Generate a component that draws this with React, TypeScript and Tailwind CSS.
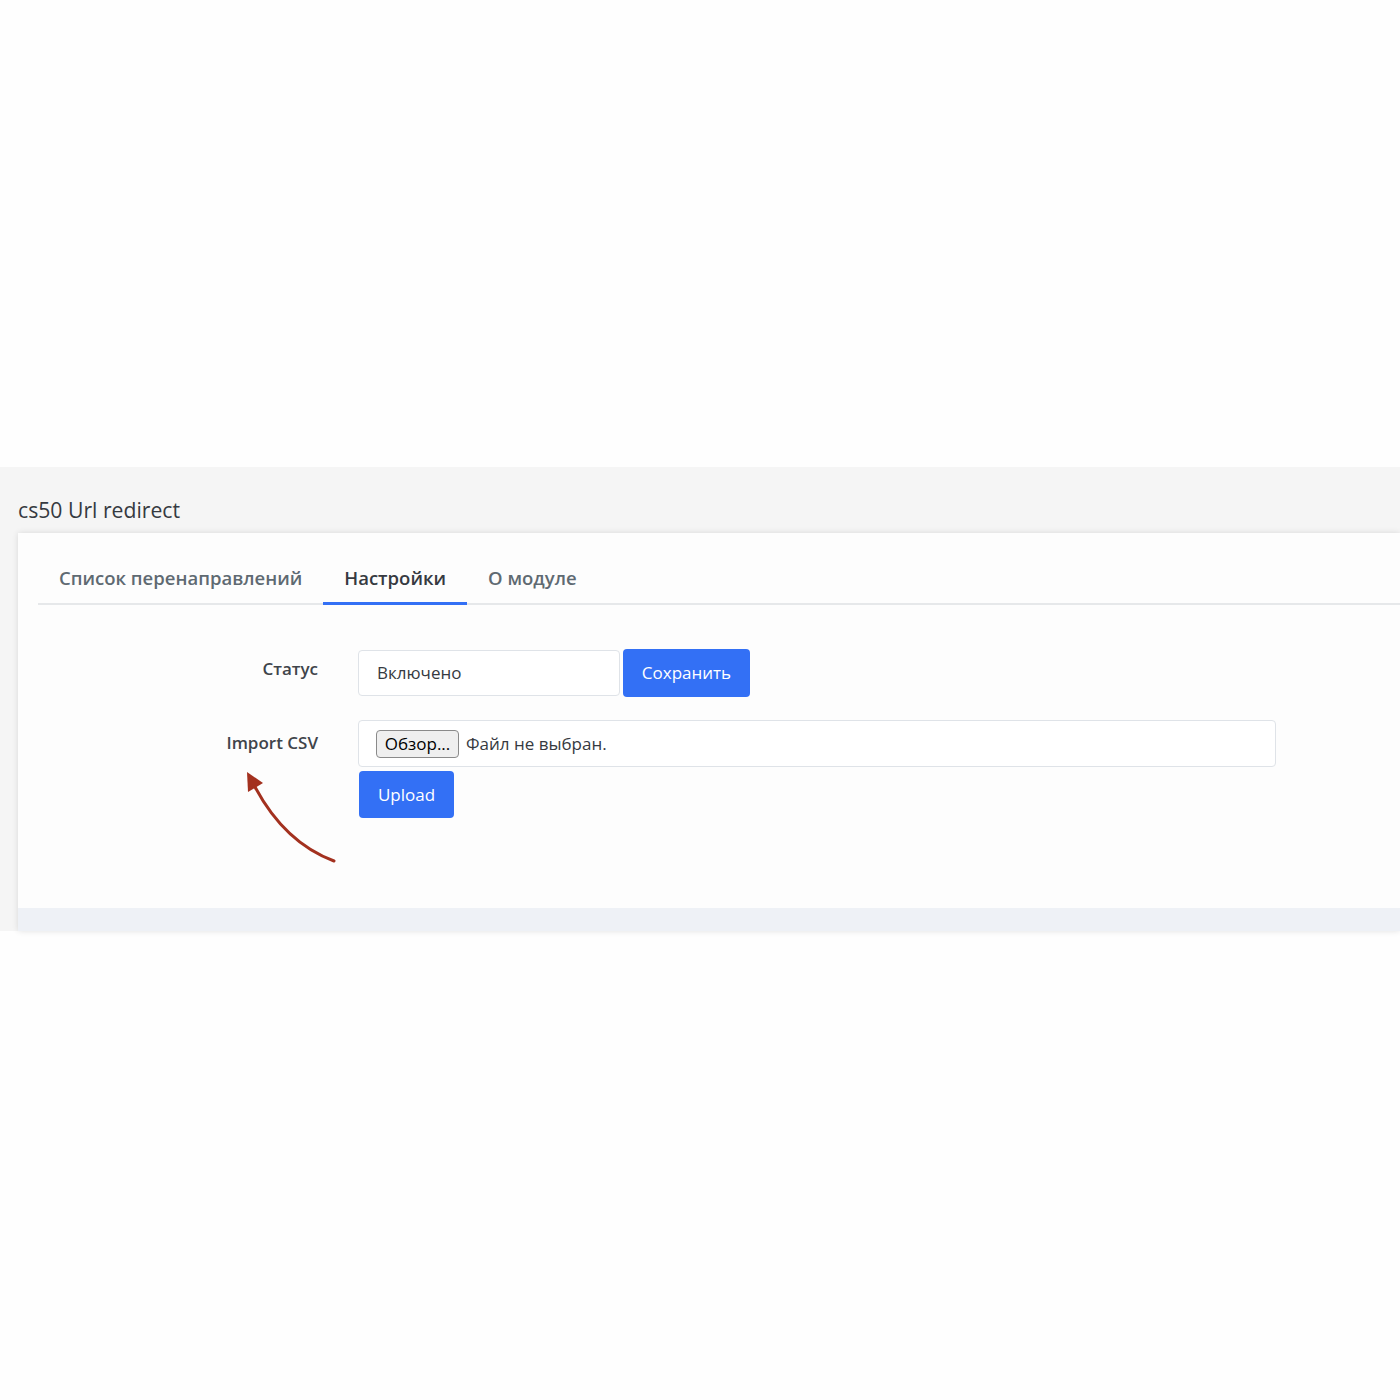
import React from "react";

export default function App() {
  const font = { fontFamily: '"Open Sans", "Noto Sans", sans-serif' };
  return (
    <div className="w-[1400px] h-[1400px] bg-[#fefefe] overflow-hidden" style={font}>
      <div className="h-[467px]" />
      <div className="bg-[#f5f5f5] pl-[18px] pt-[28px]">
        <h1 className="text-[21.2px] leading-[30px] text-[#363a41] font-normal mb-[8px]">cs50 Url redirect</h1>
        <div className="bg-[#fdfdfd] shadow-[0_0_6px_rgba(0,0,0,0.12)] relative">
          <div className="pl-[20px] pt-[20px]">
            <div className="flex border-b-2 border-[#e6e8ea] text-[18.5px] leading-[27px] font-semibold">
              <div className="px-[21px] pt-[11px] pb-[11px] text-[#5f6a72] -mb-[2px] border-b-[3px] border-transparent">Список перенаправлений</div>
              <div className="px-[21px] pt-[11px] pb-[11px] text-[#363a41] -mb-[2px] border-b-[3px] border-[#3370f5]">Настройки</div>
              <div className="px-[21px] pt-[11px] pb-[11px] text-[#5f6a72] -mb-[2px] border-b-[3px] border-transparent">О модуле</div>
            </div>
            <div className="relative pt-[44px] pb-[90px]">
              <div className="grid grid-cols-[280px_1fr] gap-x-[40px] gap-y-[23px]">
                <div className="text-right text-[17px] leading-[24px] font-semibold text-[#3f444a] pt-[8px]">Статус</div>
                <div className="flex items-center gap-[3px]">
                  <div className="w-[262px] h-[46px] border border-[#dfe3e8] rounded-[4px] bg-white flex items-center pl-[18px] text-[17px] text-[#363a41]">Включено</div>
                  <div className="w-[127px] h-[48px] rounded-[4px] bg-[#3370f5] text-white text-[17px] flex items-center justify-center">Сохранить</div>
                </div>
                <div className="text-right text-[17px] leading-[24px] font-semibold text-[#3f444a] pt-[11px]">Import CSV</div>
                <div className="flex flex-col items-start gap-[4px]">
                  <div className="w-[918px] h-[47px] border border-[#dfe3e8] rounded-[4px] bg-white flex items-center pl-[17px] gap-[7px]">
                    <div className="w-[83px] h-[28px] border border-[#8a8a8a] rounded-[4px] bg-[#efefef] text-[17px] text-black flex items-center justify-center">Обзор...</div>
                    <span className="text-[17px] text-[#363a41]">Файл не выбран.</span>
                  </div>
                  <div className="ml-[1px] w-[95px] h-[47px] rounded-[4px] bg-[#3370f5] text-white text-[17px] flex items-center justify-center">Upload</div>
                </div>
              </div>
              <svg className="absolute left-0 top-0 pointer-events-none" width="400" height="300" viewBox="38 604 400 300">
                <path d="M334 860 Q285 842 255 786" fill="none" stroke="#a3311f" strokeWidth="3" strokeLinecap="round" />
                <polygon points="247,771 248,791 263,782" fill="#a3311f" />
              </svg>
            </div>
          </div>
          <div className="h-[23px] bg-[#eef1f6]" />
        </div>
      </div>
    </div>
  );
}
